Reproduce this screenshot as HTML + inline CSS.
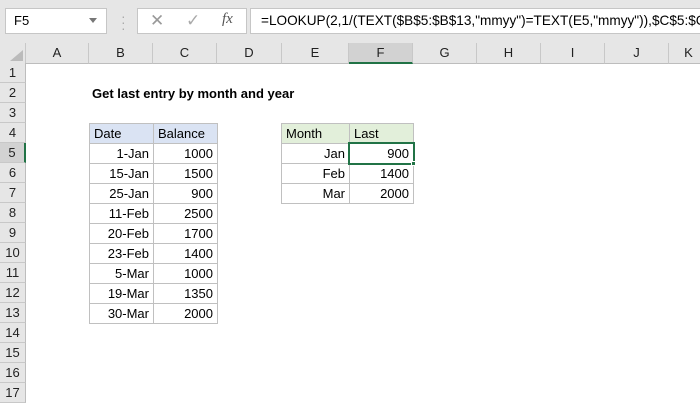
<!DOCTYPE html><html><head><style>
*{margin:0;padding:0;box-sizing:border-box}
body{width:700px;height:400px;overflow:hidden;background:#fff;font-family:"Liberation Sans",sans-serif;font-size:13px;position:relative;color:#000}
.a{position:absolute}
.top{left:0;top:0;width:700px;height:43px;background:#e6e6e6}
.box{background:#fff;border:1px solid #c6c6c6}
.ch{top:43px;height:21px;background:#e6e6e6;border-right:1px solid #c8c8c8;border-bottom:1px solid #bdbdbd;text-align:center;line-height:20px;font-size:13px;color:#222}
.rh{left:0;width:26px;height:20px;background:#e6e6e6;border-bottom:1px solid #c8c8c8;border-right:1px solid #bdbdbd;text-align:center;line-height:20px;color:#222}
.c{height:21px;width:65px;border:1px solid #c0c0c0;line-height:19px;padding:0 4px;text-align:right;white-space:nowrap}
.l{text-align:left}
</style></head><body>
<div class="a top"></div>
<div class="a box" style="left:5px;top:8px;width:102px;height:26px;line-height:24px;padding-left:8px">F5</div>
<div class="a" style="left:89px;top:18px;width:0;height:0;border-left:4px solid transparent;border-right:4px solid transparent;border-top:5px solid #777"></div>
<div class="a" style="left:121px;top:13px;color:#aaa;font-size:14px;line-height:6px">·<br>·<br>·</div>
<div class="a box" style="left:137px;top:8px;width:110px;height:26px"></div>
<div class="a" style="left:150px;top:11px;color:#999;font-size:17px">✕</div>
<div class="a" style="left:186px;top:11px;color:#aaa;font-size:17px">✓</div>
<div class="a" style="left:222px;top:11px;color:#555;font-style:italic;font-family:'Liberation Serif',serif;font-size:15px">fx</div>
<div class="a box" style="left:250px;top:8px;width:460px;height:26px;line-height:24px;padding-left:10px;font-size:13.6px;white-space:nowrap;overflow:hidden">=LOOKUP(2,1/(TEXT($B$5:$B$13,"mmyy")=TEXT(E5,"mmyy")),$C$5:$C$13)</div>
<div class="a ch" style="left:0;width:26px"></div>
<div class="a" style="left:10px;top:50px;width:0;height:0;border-left:13px solid transparent;border-bottom:11px solid #bbb"></div>
<div class="a ch" style="left:26px;width:63px">A</div>
<div class="a ch" style="left:89px;width:64px">B</div>
<div class="a ch" style="left:153px;width:64px">C</div>
<div class="a ch" style="left:217px;width:65px">D</div>
<div class="a ch" style="left:282px;width:67px">E</div>
<div class="a ch" style="left:349px;width:64px;background:#d2d2d2;border-bottom:2px solid #217346">F</div>
<div class="a ch" style="left:413px;width:64px">G</div>
<div class="a ch" style="left:477px;width:64px">H</div>
<div class="a ch" style="left:541px;width:64px">I</div>
<div class="a ch" style="left:605px;width:64px">J</div>
<div class="a ch" style="left:669px;width:40px">K</div>
<div class="a rh" style="top:63px">1</div><div class="a rh" style="top:83px">2</div><div class="a rh" style="top:103px">3</div><div class="a rh" style="top:123px">4</div>
<div class="a rh" style="top:143px;background:#d2d2d2;border-right:2px solid #217346">5</div>
<div class="a rh" style="top:163px">6</div><div class="a rh" style="top:183px">7</div><div class="a rh" style="top:203px">8</div><div class="a rh" style="top:223px">9</div><div class="a rh" style="top:243px">10</div><div class="a rh" style="top:263px">11</div><div class="a rh" style="top:283px">12</div><div class="a rh" style="top:303px">13</div><div class="a rh" style="top:323px">14</div><div class="a rh" style="top:343px">15</div><div class="a rh" style="top:363px">16</div><div class="a rh" style="top:383px">17</div>
<div class="a" style="left:92px;top:86px;font-weight:bold;font-size:13px">Get last entry by month and year</div>
<div class="a c l" style="left:89px;top:123px;background:#dae3f3">Date</div>
<div class="a c l" style="left:153px;top:123px;background:#dae3f3">Balance</div>
<div class="a c" style="left:89px;top:143px">1-Jan</div><div class="a c" style="left:153px;top:143px">1000</div>
<div class="a c" style="left:89px;top:163px">15-Jan</div><div class="a c" style="left:153px;top:163px">1500</div>
<div class="a c" style="left:89px;top:183px">25-Jan</div><div class="a c" style="left:153px;top:183px">900</div>
<div class="a c" style="left:89px;top:203px">11-Feb</div><div class="a c" style="left:153px;top:203px">2500</div>
<div class="a c" style="left:89px;top:223px">20-Feb</div><div class="a c" style="left:153px;top:223px">1700</div>
<div class="a c" style="left:89px;top:243px">23-Feb</div><div class="a c" style="left:153px;top:243px">1400</div>
<div class="a c" style="left:89px;top:263px">5-Mar</div><div class="a c" style="left:153px;top:263px">1000</div>
<div class="a c" style="left:89px;top:283px">19-Mar</div><div class="a c" style="left:153px;top:283px">1350</div>
<div class="a c" style="left:89px;top:303px">30-Mar</div><div class="a c" style="left:153px;top:303px">2000</div>
<div class="a c l" style="left:281px;top:123px;width:69px;background:#e2efda">Month</div>
<div class="a c l" style="left:349px;top:123px;background:#e2efda">Last</div>
<div class="a c" style="left:281px;top:143px;width:69px">Jan</div><div class="a c" style="left:349px;top:143px">900</div>
<div class="a c" style="left:281px;top:163px;width:69px">Feb</div><div class="a c" style="left:349px;top:163px">1400</div>
<div class="a c" style="left:281px;top:183px;width:69px">Mar</div><div class="a c" style="left:349px;top:183px">2000</div>
<div class="a" style="left:348px;top:142px;width:67px;height:23px;border:2px solid #217346"></div>
<div class="a" style="left:411px;top:161px;width:5px;height:5px;background:#217346;border:1px solid #fff"></div>
</body></html>
